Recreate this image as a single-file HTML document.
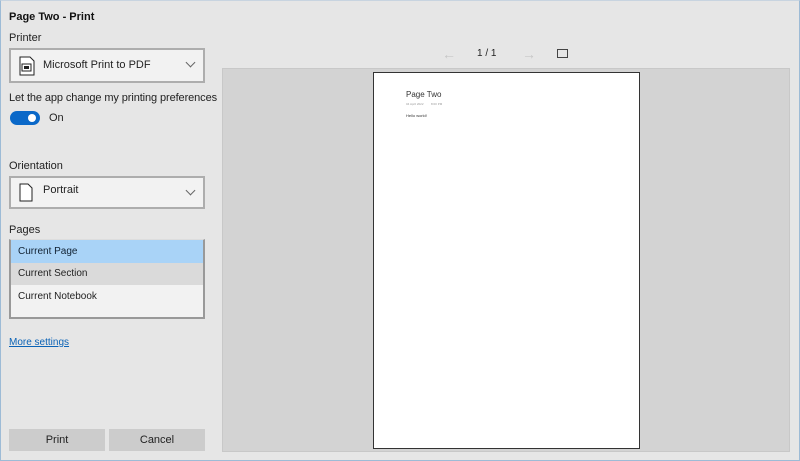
<!DOCTYPE html>
<html><head><style>
*{box-sizing:border-box;margin:0;padding:0}
body{width:800px;height:461px;background:#e6e6e6;font-family:"Liberation Sans",sans-serif;position:relative;overflow:hidden;}
.a{position:absolute}
.lbl{font-size:11px;color:#222}
.box{border:2px solid #adadad;background:#f2f2f2}
.chev{position:absolute;right:9px;top:9px;width:7px;height:7px;border-right:1px solid #666;border-bottom:1px solid #666;transform:rotate(45deg)}
.btn{background:#cccccc;font-size:11px;color:#222;text-align:center;line-height:22px}
</style></head><body>
<div class="a" style="left:0;top:0;width:800px;height:461px;border:1px solid #9dbbd6;border-top-color:#c8d4e0"></div>
<div class="a" style="left:9px;top:11px;font-size:11px;font-weight:bold;color:#111">Page Two - Print</div>
<div class="a lbl" style="left:9px;top:32px">Printer</div>
<div class="a box" style="left:9px;top:48px;width:196px;height:35px">
 <svg class="a" style="left:8px;top:6px" width="16" height="20" viewBox="0 0 16 20"><path d="M1 1h10l4 4v14H1z" fill="#fff" stroke="#222"/><rect x="3" y="8" width="9" height="7" fill="none" stroke="#222"/><rect x="5" y="10" width="5" height="3" fill="#222"/></svg>
 <div class="a" style="left:32px;top:9px;font-size:11px;color:#222">Microsoft Print to PDF</div>
 <div class="chev"></div>
</div>
<div class="a lbl" style="left:9px;top:92px;letter-spacing:-0.1px">Let the app change my printing preferences</div>
<div class="a" style="left:10px;top:111px;width:30px;height:14px;border-radius:7px;background:#0a68c8"><div class="a" style="right:4px;top:3px;width:8px;height:8px;border-radius:4px;background:#fff"></div></div>
<div class="a lbl" style="left:49px;top:112px">On</div>
<div class="a lbl" style="left:9px;top:160px">Orientation</div>
<div class="a box" style="left:9px;top:176px;width:196px;height:33px">
 <svg class="a" style="left:8px;top:5px" width="14" height="19" viewBox="0 0 14 19"><path d="M1 1h8l4 4v13H1z" fill="#fff" stroke="#222"/></svg>
 <div class="a" style="left:32px;top:6px;font-size:11px;color:#222">Portrait</div>
 <div class="chev"></div>
</div>
<div class="a lbl" style="left:9px;top:224px">Pages</div>
<div class="a" style="left:9px;top:239px;width:196px;height:80px;border:2px solid #999;border-top:1px solid #ddd;background:#f2f2f2">
 <div style="height:23px;background:#a9d3f7;font-size:10px;color:#123;padding:6px 7px;">Current Page</div>
 <div style="height:22px;background:#dadada;font-size:10px;color:#222;padding:5px 7px;">Current Section</div>
 <div style="height:23px;background:#f2f2f2;font-size:10px;color:#222;padding:6px 7px;">Current Notebook</div>
</div>
<div class="a" style="left:9px;top:337px;font-size:10px;color:#0b63b6;text-decoration:underline">More settings</div>
<div class="a btn" style="left:9px;top:429px;width:96px;height:22px">Print</div>
<div class="a btn" style="left:109px;top:429px;width:96px;height:22px">Cancel</div>
<div class="a" style="left:442px;top:46px;color:#c6c6c6;font-size:14px">←</div>
<div class="a" style="left:477px;top:48px;font-size:10px;color:#222">1 / 1</div>
<div class="a" style="left:522px;top:46px;color:#c6c6c6;font-size:14px">→</div>
<div class="a" style="left:557px;top:49px;width:11px;height:9px;border:1px solid #444"></div>
<div class="a" style="left:222px;top:68px;width:568px;height:384px;background:#d3d3d3;border:1px solid #c8c8c8"></div>
<div class="a" style="left:373px;top:72px;width:267px;height:377px;background:#fff;border:1px solid #333">
 <div class="a" style="left:32px;top:17px;font-size:8px;color:#333">Page Two</div>
 <div class="a" style="left:32px;top:29px;font-size:3px;color:#999">04 April 2022&nbsp;&nbsp;&nbsp;&nbsp;&nbsp;&nbsp;&nbsp;&nbsp;&nbsp;8:00 PM</div>
 <div class="a" style="left:32px;top:40px;font-size:4px;color:#333">Hello world!</div>
</div>
</body></html>
